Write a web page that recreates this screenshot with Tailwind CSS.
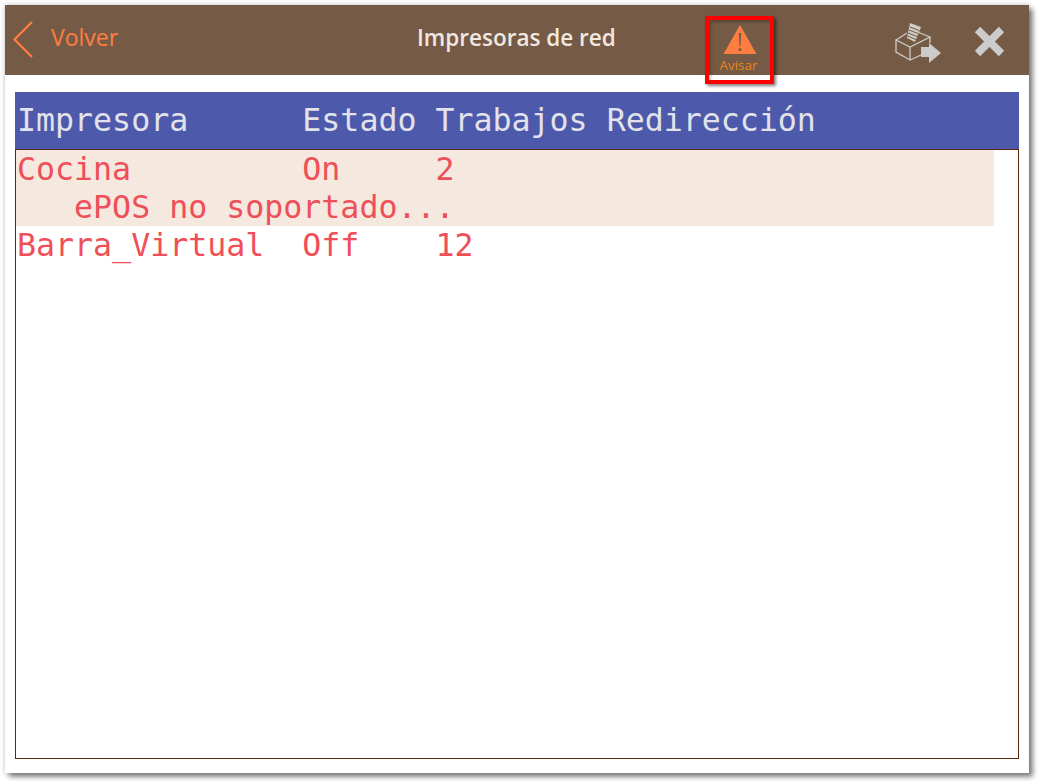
<!DOCTYPE html>
<html lang="es">
<head>
    <meta charset="UTF-8">
    <title>Impresoras de red</title>
    <script src="https://cdn.jsdelivr.net/npm/@tailwindcss/browser@4"></script>
</head>
<body class="bg-white h-[782px] w-[1038px] overflow-hidden pt-[5px] pl-[5px]">
    <div class="relative w-[1024px] h-[768px] bg-white flex flex-col shadow-[0_0_5px_rgba(0,0,0,0.25),4px_4px_5px_rgba(0,0,0,0.45)]">
        <!-- Header -->
        <div class="relative h-[70px] bg-[#755b45] flex items-center shrink-0 font-['Open_Sans',sans-serif]">
            <svg class="ml-[7px] mt-[-1px]" width="22" height="40" viewBox="0 0 22 40" fill="none">
                <path d="M20 2 L2.500 19.500 L20 37" stroke="#ff7d40" stroke-width="2.200"/>
            </svg>
            <span class="ml-[17px] mt-[-5px] text-[23px] leading-none text-[#ff7d40]">Volver</span>
            <span class="absolute left-[412px] top-[22px] text-[22.500px] leading-none font-semibold text-[#f0e8e0]">Impresoras de red</span>

            <div class="absolute left-[700px] top-[11px] w-[69px] h-[68px] border-[4px] border-[#ff0000] shadow-[2px_2px_3px_rgba(0,0,0,0.5),inset_2px_2px_3px_rgba(0,0,0,0.25)] flex flex-col items-center">
                <svg class="mt-[5px]" width="34" height="30" viewBox="0 0 34 30">
                    <path d="M17 0 L33.500 29 L0.500 29 Z" fill="#ff7d40"/>
                    <path d="M15.800 8 L18.200 8 L17.500 21 L16.500 21 Z" fill="#755b45"/>
                    <circle cx="17" cy="24.500" r="1.500" fill="#755b45"/>
                </svg>
                <span class="mt-[4px] ml-[-2px] text-[13.500px] leading-none text-[#ea8420]">Avisar</span>
            </div>

            <svg class="absolute left-[890px] top-[15px]" width="48" height="46" viewBox="0 0 48 46" fill="none">
                <path d="M1 20 L12 13 M20 11 L35 17 L15 27 L1 20 L1 32 L15 40 L15 27 M35 17 L35 23 M15 40 L26 35" stroke="#cfcbc6" stroke-width="1.300"/>
                <path d="M15 3 L26 7 L20 22 L12 18 Z" fill="#cfcbc6"/>
                <path d="M15 7 L24 10.500 M14 10 L23 13.500 M13 13 L22 16.500 M12.500 16 L21 19.500" stroke="#755b45" stroke-width="1"/>
                <path d="M26 27 L34 27 L34 23 L46 33 L34 43 L34 37 L26 37 Z" fill="#cbcbcb"/>
            </svg>
            <svg class="absolute left-[969px] top-[21px]" width="31" height="31" viewBox="0 0 31 31">
                <path d="M3.500 3.500 L27.500 27.500 M27.500 3.500 L3.500 27.500" stroke="#cccccc" stroke-width="7.500"/>
            </svg>
        </div>

        <!-- Table -->
        <div class="mt-[17px] mx-[10px] h-[667px] w-[1004px] border border-[#5c2a10] font-['DejaVu_Sans_Mono',monospace] text-[31.600px] leading-[38px]">
            <div class="-mx-px -mt-px h-[58px] bg-[#4d59ab] border-b border-[#5c2a10] text-[#e2e2ea] pl-[2px] pt-[9px] whitespace-pre">Impresora      Estado Trabajos Redirección</div>
            <div class="w-[978px] bg-[#f4e8df] text-[#ef4f58] pl-[1px]">
                <div class="whitespace-pre">Cocina         On     2</div>
                <div class="whitespace-pre">   ePOS no soportado...</div>
            </div>
            <div class="text-[#ef4f58] pl-[1px] whitespace-pre">Barra_Virtual  Off    12</div>
        </div>
    </div>
</body>
</html>
